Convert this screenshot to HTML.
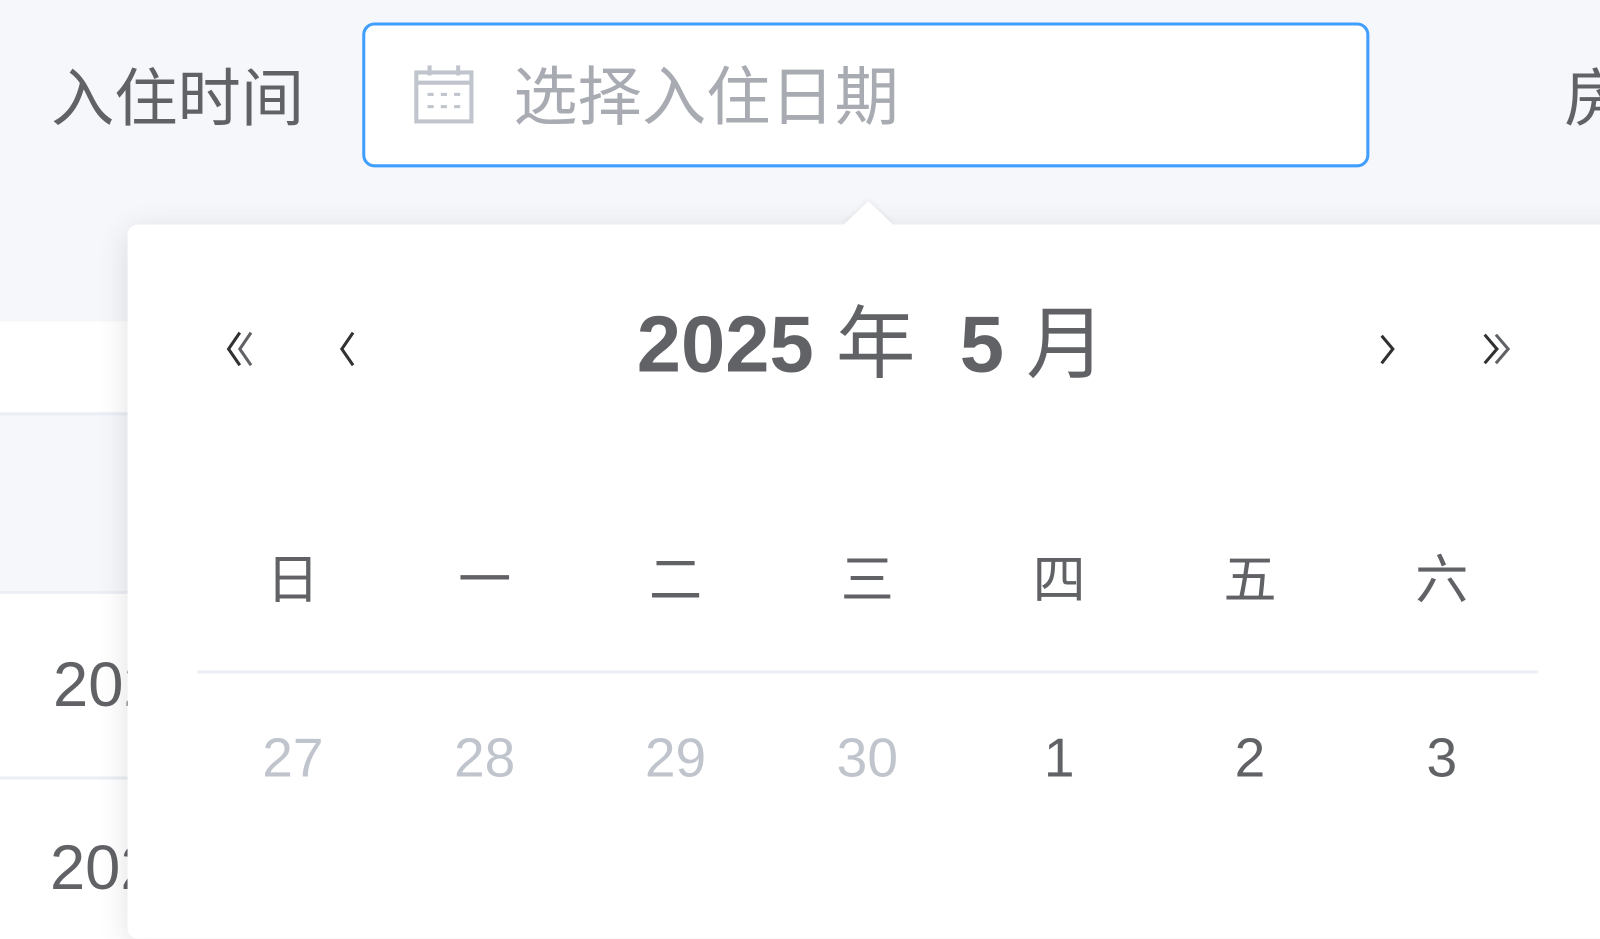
<!DOCTYPE html>
<html><head><meta charset="utf-8"><style>
*{margin:0;padding:0;box-sizing:border-box}
html,body{width:1600px;height:904px;overflow:hidden;background:#fff}
#w{position:absolute;left:0;top:0;width:1568px;height:886px;transform:scale(1.0204);transform-origin:0 0;font-family:"Liberation Sans","Noto Sans CJK SC",sans-serif;color:#606266}
.top{position:absolute;left:0;top:0;width:1600px;height:315px;background:#f5f7fa}
.a{position:absolute;white-space:nowrap}
.line{position:absolute;left:0;width:125px;height:3px;background:#ebeef5}
.input{position:absolute;left:355px;top:22px;width:987px;height:142px;border:3px solid #409eff;border-radius:12px;background:#fff}
.pop{position:absolute;left:125px;top:220px;width:1500px;height:700px;background:#fff;border-radius:10px;box-shadow:0 6px 30px rgba(0,0,0,.12)}
.arrow{position:absolute;left:826px;top:197px;width:0;height:0;border-left:25px solid transparent;border-right:25px solid transparent;border-bottom:24px solid #fff;filter:drop-shadow(0 -2px 2px rgba(0,0,0,.05))}
.wd{position:absolute;top:526px;width:100px;text-align:center;font-size:52px;color:#606266}
.d{position:absolute;top:712px;width:100px;text-align:center;font-size:54px;color:#606266}
.g{color:#c0c4cc}
</style></head><body><div id="w">
<div class="top"></div>
<div style="position:absolute;left:0;top:405px;width:125px;height:175px;background:#f5f7fa"></div>
<div class="line" style="top:404px"></div>
<div class="line" style="top:579px"></div>
<div class="line" style="top:761px"></div>
<div class="a" style="left:52px;top:636px;font-size:62px;color:#606266">2025</div>
<div class="a" style="left:49px;top:815px;font-size:62px;color:#606266">2025</div>
<div class="a" style="left:50px;top:46px;font-size:62px;color:#606266">入住时间</div>
<div class="a" style="left:1533px;top:46px;font-size:62px;color:#606266">房</div>
<div class="input"></div>
<svg class="a" style="left:405px;top:64px" width="60" height="58" viewBox="0 0 60 58">
<g fill="none" stroke="#c0c4cc" stroke-width="4">
<rect x="3" y="7" width="54" height="48"/><line x1="3" y1="17" x2="57" y2="17"/>
<line x1="16" y1="0" x2="16" y2="10"/><line x1="44" y1="0" x2="44" y2="10"/></g>
<g fill="#c0c4cc"><rect x="14" y="27" width="6" height="3"/><rect x="27" y="27" width="6" height="3"/><rect x="40" y="27" width="6" height="3"/>
<rect x="14" y="39" width="6" height="3"/><rect x="27" y="39" width="6" height="3"/><rect x="40" y="39" width="6" height="3"/></g></svg>
<div class="a" style="left:503px;top:45px;font-size:63px;color:#a8abb2">选择入住日期</div>
<div class="pop"></div>
<div class="arrow"></div>
<svg class="a" style="left:215px;top:320px" width="300" height="50" viewBox="0 0 300 50">
<g fill="none" stroke="#303133" stroke-width="3"><polyline points="20,6 9,22 20,38"/><polyline points="31,6 20,22 31,38" stroke="#606266"/><polyline points="131,6 120,22 131,38"/></g></svg>
<svg class="a" style="left:1345px;top:320px" width="160" height="50" viewBox="0 0 160 50">
<g fill="none" stroke="#303133" stroke-width="3"><polyline points="9,9 20,22 9,36"/><polyline points="110,8 122,22 110,36"/><polyline points="121,8 133,22 121,36" stroke="#606266"/></g></svg>
<div class="a" style="left:624px;top:275px;font-size:78px;font-weight:bold;color:#606266">2025 <span style="font-weight:normal">年</span>&nbsp; 5 <span style="font-weight:normal">月</span></div>
<div class="wd" style="left:237px">日</div>
<div class="wd" style="left:425px">一</div>
<div class="wd" style="left:612px">二</div>
<div class="wd" style="left:800px">三</div>
<div class="wd" style="left:988px">四</div>
<div class="wd" style="left:1175px">五</div>
<div class="wd" style="left:1363px">六</div>
<div style="position:absolute;left:193px;top:657px;width:1314px;height:3px;background:#ebeef5"></div>
<div class="d g" style="left:237px">27</div>
<div class="d g" style="left:425px">28</div>
<div class="d g" style="left:612px">29</div>
<div class="d g" style="left:800px">30</div>
<div class="d" style="left:988px">1</div>
<div class="d" style="left:1175px">2</div>
<div class="d" style="left:1363px">3</div>
</div></body></html>
